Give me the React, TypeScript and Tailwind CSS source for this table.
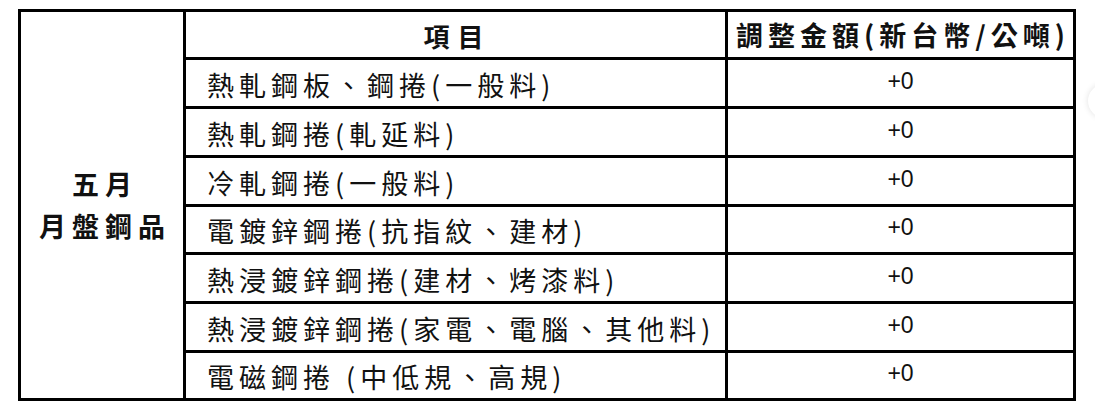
const items = [
  '熱軋鋼板、鋼捲(一般料)',
  '熱軋鋼捲(軋延料)',
  '冷軋鋼捲(一般料)',
  '電鍍鋅鋼捲(抗指紋、建材)',
  '熱浸鍍鋅鋼捲(建材、烤漆料)',
  '熱浸鍍鋅鋼捲(家電、電腦、其他料)',
  '電磁鋼捲 (中低規、高規)',
];

const cjk = "font-['Noto_Sans_CJK_TC','Noto_Sans_CJK_JP',sans-serif]";

export default function App() {
  return (
    <div className="relative h-[417px] w-full overflow-hidden bg-white">
      <div className="pl-[18px] pt-[9px]">
        <div className="grid w-[1058px] grid-cols-[162px_539px_345px] grid-rows-[45px_46px_46px_46px_45px_46px_46px_45px] gap-[3px] bg-black p-[3px] text-[#111]">
          <div className={`row-span-8 flex flex-col items-center justify-center bg-white pl-[6px] text-[27px] font-bold leading-[42px] tracking-[6px] ${cjk}`}>
            <span>五月</span>
            <span>月盤鋼品</span>
          </div>
          <div className={`flex items-center justify-center bg-white pl-[4px] pt-[2px] text-[26px] font-bold tracking-[8px] ${cjk}`}>
            項目
          </div>
          <div className={`flex items-center justify-center bg-white pl-[5px] pt-[2px] text-[27px] font-bold tracking-[5px] ${cjk}`}>
            調整金額(新台幣/公噸)
          </div>
          {items.map((name) => (
            <div key={name} className="contents">
              <div className={`flex items-center bg-white pl-[21px] pt-[2px] text-[27px] leading-none tracking-[5px] ${cjk}`}>
                {name}
              </div>
              <div className="flex items-center justify-center bg-white pb-[4px] font-['Liberation_Sans',Arial,sans-serif] text-[23px] leading-none">
                +0
              </div>
            </div>
          ))}
        </div>
      </div>
      <div className="absolute left-[1088px] top-[84px] h-[34px] w-[34px] rounded-full bg-white shadow-[0_0_6px_rgba(0,0,0,0.12)]" />
    </div>
  );
}
